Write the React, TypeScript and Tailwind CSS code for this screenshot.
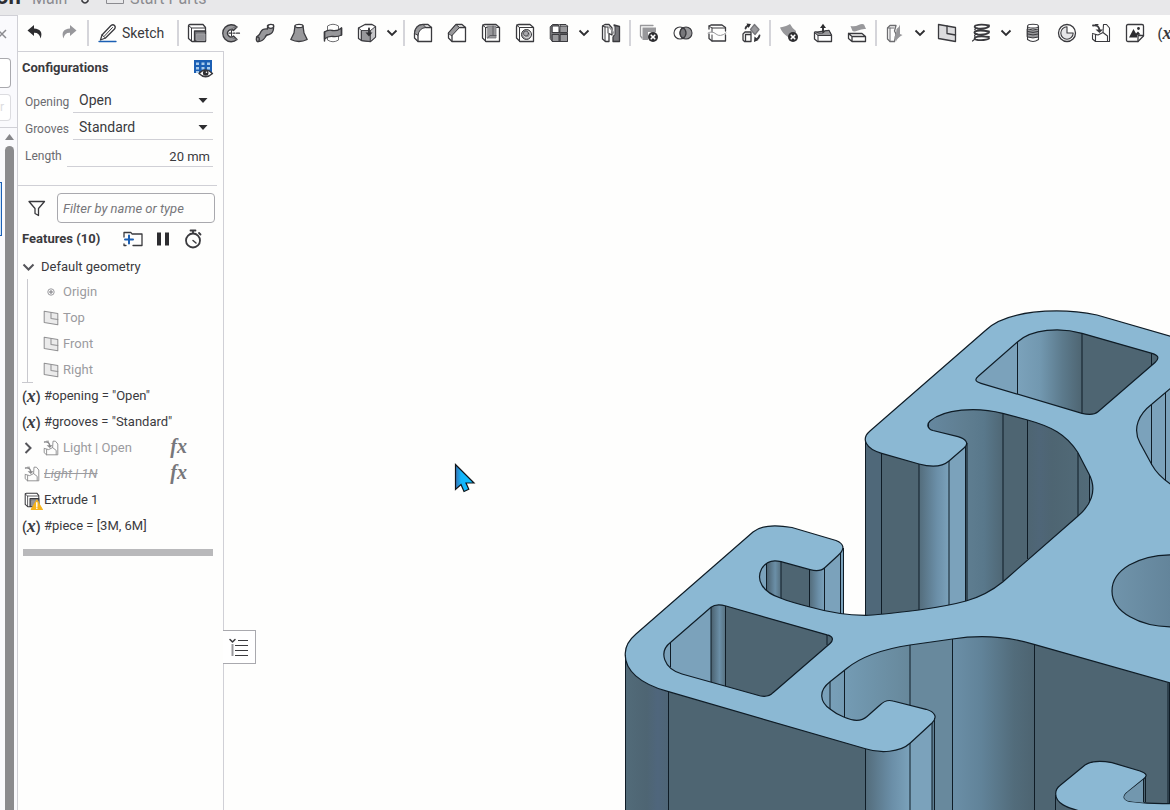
import type { ReactNode } from "react";

// === COLOURS OF THE SOLID ===
const FACE = "#8bb8d3";
const LIGHT = "#7ba2bb";
const DARK = "#4e6572";
const EDGE = "#0f1c26";

const S = { fill: "none", stroke: "#3a3a3e", strokeWidth: 1.3, strokeLinejoin: "round" as const, strokeLinecap: "round" as const };
const G = "#98989b";

function Icon({ children, className = "h-5 w-5" }: { children: ReactNode; className?: string }) {
  return (
    <svg viewBox="0 0 20 20" className={`${className} shrink-0 overflow-visible`} aria-hidden="true" {...S}>
      {children}
    </svg>
  );
}

const deleteBadge = (
  <>
    <circle cx="14" cy="14" r="5" fill="#2d2d30" stroke="none" />
    <path d="M12.200 12.200l3.600 3.600M15.800 12.200l-3.600 3.600" stroke="#fff" strokeWidth="1.600" />
  </>
);

const boxOutline = <path d="M1.500 4Q1.500 1.500 4 1.500H15L18.500 4.500V18.500H5L1.500 15Z" />;

const extrude = (
  <>
    <path d="M1.500 3Q1.500 1.500 3 1.500H16L18.500 4.500V18.500H5L1.500 15.500Z" fill="#fff" />
    <path d="M1.500 2.500L4.500 5V18M4.500 5H18" strokeWidth="1" />
    <path d="M7.500 8H18.500V18H7.500Z" fill="#77777b" />
    <path d="M10 11H18V17.500H10Z" fill="#949498" stroke="#a9a9ad" strokeWidth=".8" />
  </>
);

const derived = (
  <>
    <path d="M7 1.500H4.500M1.500 11.500V16L4.500 18.500H18.500V5L15.500 1.500H12.500L12 9.500L7 12L1.500 10.500M4.500 18.500V12M12 9.500L16.500 13V18" strokeWidth="1.100" />
    <path d="M2 2.500Q7.500 1.500 8.500 7" strokeWidth="1.800" />
    <path d="M4.500 6.500H12L8.500 10Z" fill="#3a3a3e" stroke="none" />
  </>
);

const plane = (
  <>
    <path d="M1.500 1.500L18.500 4.500V18.500L1.500 15.500Z" fill="#dcdcde" />
    <path d="M10 3V10.500L18.500 12" />
  </>
);

const icons: Record<string, ReactNode> = {
  Undo: (
    <path d="M9 2L2.500 7.500L9 13V9.700Q14.500 9.500 15.500 15.500Q19 6.200 9 5.400Z" fill="#2d2d30" stroke="none" />
  ),
  Redo: (
    <path d="M11 2L17.500 7.500L11 13V9.700Q5.500 9.500 4.500 15.500Q1 6.200 11 5.400Z" fill="#98989c" stroke="none" />
  ),
  Extrude: extrude,
  Revolve: (
    <>
      <path d="M16 4A8.500 8.500 0 1 0 16 16.500L12.500 13A3.600 3.600 0 1 1 12.500 7.500Z" fill={G} />
      <path d="M16 4L12.500 4.500L9.500 7M16 16.500L12.500 15.500L9.500 13.500" stroke="#6d6d70" strokeWidth=".9" />
      <path d="M8 10.200H11M12.500 10.200H14M15.500 10.200H18.500" strokeWidth="1.200" />
      <path d="M10.500 7.500V13" strokeWidth="1" />
    </>
  ),
  Sweep: (
    <>
      <path d="M1.500 14Q5 12 6 8.500Q7.500 5.500 12.500 6V2.500L18.500 2V6Q18 10.500 14 11.500Q11 11.500 10 14.500Q7 19 2.500 18.500Z" fill={G} />
      <ellipse cx="15.800" cy="3.300" rx="2.900" ry="2" fill="#fff" />
      <ellipse cx="2.800" cy="16.200" rx="1.500" ry="2.400" fill={G} />
    </>
  ),
  Loft: (
    <>
      <path d="M6 3L5 10L1.800 16.500Q10 20.500 18.200 16.500L15 10L14 3Z" fill={G} />
      <ellipse cx="10" cy="3" rx="4" ry="1.600" fill="#fff" />
    </>
  ),
  Thicken: (
    <>
      <path d="M4.500 7V3Q10 -.5 15.500 3V7M4.500 14V17Q10 20.500 15.500 17V13" stroke="#6d6d70" strokeWidth="1" />
      <path d="M1.500 9Q5 6.500 9.500 7.500T18.500 5V12Q15 14 10 13.500T1.500 16Z" fill={G} />
      <path d="M1.500 9V18M18.500 5V12" strokeWidth="1.500" />
    </>
  ),
  Enclose: (
    <>
      <path d="M1.500 5L8 1.500H15L18.500 3.500V14L13.500 18.500L4.500 17.500L1.500 15.500Z" fill="#fff" />
      <path d="M4.500 7.500H13.500V18.500L4.500 17.500Z" fill={G} strokeWidth=".9" />
      <path d="M13.500 7.500L18.500 3.500V14L13.500 18.500Z" fill="#c5c5c8" strokeWidth=".9" />
      <path d="M1.500 5L4.500 7.500V17.500" strokeWidth=".9" />
      <path d="M12 5.500V10.500" strokeWidth="2" />
      <path d="M8.500 9.500H15.500L12 13.500Z" fill="#2d2d30" stroke="none" />
    </>
  ),
  Fillet: (
    <>
      <path d="M1.500 11Q2 2 10 1.500H15L18.500 4.500V18.500H5L1.500 15Z" fill="#fff" />
      <path d="M1.500 10Q2.500 2 10 1.500L13 4.500Q6 5 5 12Z" fill={G} strokeWidth="1" />
      <path d="M5 18V12M13 4.500H18.500" />
    </>
  ),
  Chamfer: (
    <>
      <path d="M1.500 10L9 1.500H15L18.500 4.500V18.500H5L1.500 15Z" fill="#fff" />
      <path d="M1.500 10L9 1.500L12.500 4.500L5 12.500Z" fill={G} strokeWidth="1" />
      <path d="M5 18V12.500M12.500 4.500H18.500" />
    </>
  ),
  Shell: (
    <>
      {boxOutline}
      <path d="M1.500 2L4.500 4.500V18.500M4.500 4.500H18.500" strokeWidth="1" />
      <path d="M6.500 3H15V15H6.500Z" fill={G} stroke="#77777b" strokeWidth=".8" />
      <path d="M12 3V12.500H15M6.500 15L9 12.500H12" stroke="#55555a" strokeWidth=".9" />
    </>
  ),
  Hole: (
    <>
      {boxOutline}
      <path d="M1.500 2L4.500 4.500V18.500M4.500 4.500H18.500" strokeWidth="1" />
      <circle cx="11.500" cy="11.500" r="5" fill={G} strokeWidth="1" />
      <path d="M13 8A3.500 3.500 0 1 1 8.500 12" stroke="#ddd" strokeWidth="1" />
      <circle cx="11" cy="10.500" r="2.500" fill="#aaaaae" strokeWidth=".7" />
    </>
  ),
  Pattern: (
    <>
      <path d="M1.500 3.500L3.500 1.500H9.500L10.500 10H18.500V18.500H3.500L1.500 16Z" fill="#77777b" strokeWidth="1" />
      <path d="M3.500 3H10V9.500H3.500Z" fill="#fff" strokeWidth="1" />
      <path d="M11.500 3H18.500V9.500H11.500ZM3.500 11.500H10V18.500H3.500ZM11.500 11.500H18.500V18.500H11.500Z" fill={G} strokeWidth="1" />
      <path d="M11.500 3L10.500 1.500H17L18.500 3" strokeWidth="1" />
    </>
  ),
  "Move face": (
    <>
      <path d="M1.500 3L4 1.500H8L11 5V12L8 10.500V18.500H4.500L1.500 16Z" fill="#fff" />
      <path d="M4 3.500V18M1.500 3L4 4H7V10" strokeWidth="1" />
      <path d="M13 2L18.500 3.500V18.500H12V14L14 11V4.500Z" fill="#77777b" />
      <path d="M8 3.500L13.500 11V4" stroke={G} />
    </>
  ),
  "Delete part": (
    <>
      <path d="M3.500 4.500H17V9H9V17H3.500Z" fill={G} stroke="none" />
      <path d="M1.500 2.500H14M1.500 2.500V13L3 15" stroke={G} />
      {deleteBadge}
    </>
  ),
  Boolean: (
    <>
      <circle cx="7" cy="10" r="6" strokeWidth="1.100" />
      <circle cx="13" cy="10" r="6" fill={G} strokeWidth="1.100" />
      <path d="M10 4.800A6 6 0 0 1 10 15.200A6 6 0 0 1 10 4.800Z" fill="#77777b" />
    </>
  ),
  Split: (
    <>
      <path d="M2 6V3L4 2H15L18.500 4.500V8M18.500 12V18H5L2 15.500V11" />
      <path d="M2 3L5 5H18.500M5 5V9M5 12V18" strokeWidth="1" />
      <path d="M1 10Q5 7.500 9 11T19 10" stroke={G} strokeWidth="1" />
    </>
  ),
  Transform: (
    <>
      <path d="M2 11L4 9H10V18.500H3.500L2 17ZM4.500 11.500H10M4.500 11.500V18" />
      <path d="M13.500 1.500L18 6.500L14 11.500L9.500 6.500Z" fill={G} stroke="#77777b" />
      <path d="M4.500 5.500Q5 3 8 2.500" strokeWidth="1.800" />
      <path d="M5.500 .5L10 1L7.500 5ZM13 19L13.500 13.500L17.500 17Z" fill="#2d2d30" stroke="none" />
      <path d="M18.500 12.500Q18 15.500 15 16.500" strokeWidth="1.800" />
    </>
  ),
  "Delete face": (
    <>
      <path d="M1 4.500Q8 3 11 1Q13 5 17 8V14H9Q3 10 1 4.500Z" fill={G} stroke="none" />
      {deleteBadge}
    </>
  ),
  "Replace face": (
    <>
      <path d="M1.500 9.500V16L4.500 18.500H18.500V12L16 7.500Z" fill="#fff" />
      <path d="M1.500 9.500L5 12.500H18.500L16 7.500Q12 7 10 10Q6 11 3 9Z" fill={G} strokeWidth="1" />
      <path d="M5 12.500V18" strokeWidth="1" />
      <path d="M10 9V3.500" strokeWidth="2" />
      <path d="M7 5L10 .8L13 5Z" fill="#2d2d30" stroke="none" />
    </>
  ),
  "Offset surface": (
    <>
      <path d="M3.500 3Q8 4 11.500 2Q15 .5 17 1.500L19 6Q15 5.500 11 7.500Q7 9 5.500 8Z" fill={G} stroke="none" />
      <path d="M1.500 10.500H15L18.500 13.500V18.500H5L1.500 15.500ZM1.500 10.500L5 13.500H18.500M5 13.500V18.500" />
    </>
  ),
  "Frame tools": (
    <>
      <path d="M2.500 5L5 2.500H11L9.500 8L11 11L9.500 18.500H5L2.500 16Z" fill="#fff" stroke="#6d6d70" />
      <path d="M5 5V18.500M2.500 5H9" stroke="#6d6d70" strokeWidth="1" />
      <path d="M11.500 6Q14 5 15 1.500V11L17.500 12Q12 15 11 18.500L9.500 14Q11.500 11 11.500 6Z" fill={G} stroke="none" />
    </>
  ),
  Plane: plane,
  Helix: (
    <g strokeWidth="1.800">
      <path d="M18 2.500Q10 .8 4.500 2.500Q2 4.500 7 5.500Q15 6 18 3.500M18 8.500Q8 6.500 4 8.500Q2 10.500 7 11.500Q15 12 18 9.500M18 14Q8 12.500 4 14.500Q2.500 16.500 7 17Q15 17.500 18 15.500" />
      <path d="M4.500 5.500Q3 6.500 4.500 7M4.500 11.500Q3 12.500 4 13.500M1.500 18L4 16" strokeWidth="1.200" />
    </g>
  ),
  Thread: (
    <>
      <path d="M4.500 3.500V16.500Q10 20.500 15.500 16.500V3.500" fill="#fff" strokeWidth="1.100" />
      <path d="M4.500 6Q10 8 15.500 6V14Q10 16 4.500 14Z" fill={G} strokeWidth="1" />
      <ellipse cx="10" cy="3.200" rx="5.500" ry="1.900" fill="#fff" strokeWidth="1.100" />
      <path d="M4.500 8.500Q10 10.500 15.500 8.500M4.500 11Q10 13 15.500 11" strokeWidth="1" />
    </>
  ),
  "Mate connector": (
    <>
      <circle cx="10" cy="10" r="8.500" />
      <path d="M10 3.800A6.200 6.200 0 1 0 16.200 10H10Z" fill="#e6e6e8" strokeWidth="1.100" />
    </>
  ),
  Derived: derived,
  "Insert image": (
    <>
      <path d="M3 1.500H17Q18.500 1.500 18.500 3V13L13 18.500H3Q1.500 18.500 1.500 17V3Q1.500 1.500 3 1.500Z" />
      <path d="M18.500 12.500H13V18.500" />
      <path d="M4 14.500L8.500 6L11 10.500L13 8.500L15.500 11.500L12 12V14.500Z" fill="#2d2d30" stroke="none" />
      <circle cx="13.500" cy="5.500" r="1.400" fill="#2d2d30" stroke="none" />
    </>
  ),
};

function ToolButton({ name }: { name: string }) {
  return (
    <button type="button" aria-label={name} className="flex h-9 w-[34px] shrink-0 items-center justify-center">
      <Icon>{icons[name]}</Icon>
    </button>
  );
}

function Caret() {
  return (
    <button type="button" aria-label="More tools" className="flex h-9 w-[18px] shrink-0 items-center justify-center pr-0.5">
      <svg viewBox="0 0 12 8" className="h-2 w-3" fill="none" stroke="#2d2d30" strokeWidth="1.800" aria-hidden="true">
        <path d="M1.500 1.500L6 6L10.500 1.500" />
      </svg>
    </button>
  );
}

const Separator = () => <span className="mx-px h-[26px] w-0.5 shrink-0 bg-[#d5d5da]" />;

const groups: string[][] = [
  ["Extrude", "Revolve", "Sweep", "Loft", "Thicken", "Enclose", ">"],
  ["Fillet", "Chamfer", "Shell", "Hole", "Pattern", ">", "Move face"],
  ["Delete part", "Boolean", "Split", "Transform"],
  ["Delete face", "Replace face", "Offset surface"],
  ["Frame tools", ">", "Plane", "Helix", ">", "Thread", "Mate connector", "Derived", "Insert image"],
];

function Toolbar() {
  return (
    <div className="flex h-9 shrink-0 items-center overflow-hidden">
      <ToolButton name="Undo" />
      <ToolButton name="Redo" />
      <Separator />
      <button type="button" className="flex h-9 w-[86px] shrink-0 items-center gap-1 pl-2 text-[14px] text-[#3a3a3e]">
        <Icon>
          <path d="M2.500 17L4 12L13 2.500Q15 1 16.500 2.500Q18 4 16.500 6L7.500 15Z" />
          <path d="M4 12L7.500 15M6.500 13L14.500 4.500" strokeWidth="1" />
          <path d="M1 18.500H18" stroke="#1b5fb4" />
        </Icon>
        Sketch
      </button>
      {groups.map((group, g) => (
        <div key={g} className="flex shrink-0 items-center">
          <Separator />
          {group.map((name, i) => (name === ">" ? <Caret key={i} /> : <ToolButton key={name} name={name} />))}
        </div>
      ))}
      <button type="button" aria-label="Variable" className="ml-1 flex h-9 shrink-0 items-center">
        <VariableGlyph />
      </button>
    </div>
  );
}

function VariableGlyph() {
  return (
    <span className="w-[22px] text-[14px] leading-5 font-medium whitespace-nowrap text-[#3a3a3e]">
      (<span className="font-[family-name:'Liberation_Serif',serif] text-[18px] leading-5 font-bold italic">x</span>)
    </span>
  );
}

function TopBar() {
  return (
    <header className="flex h-[15px] shrink-0 items-end overflow-hidden bg-[#e8e8ea] pb-1.5">
      <div className="-ml-1 flex items-baseline text-[16px] leading-5 whitespace-nowrap text-[#8b8b90]">
        <span className="w-9 text-[22px] leading-5 font-bold text-[#2d2d30]">on</span>
        <span className="w-[49px]">Main</span>
        <svg viewBox="0 0 8 12" className="mr-[17px] h-3 w-2" fill="none" stroke="#3a3a3e" strokeWidth="1.500" aria-hidden="true">
          <path d="M1 5V9Q4 13 7 9V5" />
        </svg>
        <svg viewBox="0 0 18 12" className="mr-[6px] h-3 w-[18px]" fill="none" stroke="#8b8b90" aria-hidden="true">
          <path d="M.5 0V11.500H17.500V0" />
        </svg>
        <span>Start Parts</span>
      </div>
    </header>
  );
}

// Right end of the parts list, cut by the left side of the window.
function TabStrip() {
  return (
    <aside className="flex w-[18px] shrink-0 flex-col border-t border-r border-[#d0d0d6] bg-[#fafafd]">
      <button type="button" aria-label="Close" className="flex h-9 shrink-0 items-center">
        <svg viewBox="0 0 8 10" className="h-2.5 w-2" fill="none" stroke="#8b8b90" strokeWidth="1.500" aria-hidden="true">
          <path d="M-2 1L6 9M6 1L-2 9" />
        </svg>
      </button>
      <div className="mt-1.5 h-[30px] w-[11px] shrink-0 rounded-r border border-l-0 border-[#a9a9ae] bg-white" />
      <div className="mt-1.5 h-[27px] w-[11px] shrink-0 rounded-r border border-l-0 border-[#dcdce0] bg-white text-[12px] leading-6 text-[#dcdce0]">
        r
      </div>
      <div className="mt-1.5 flex min-h-0 flex-1 border-t border-[#d0d0d6]">
        <div className="mt-[54px] h-[54px] w-[5px] shrink-0">
          <div className="h-full w-0.5 border-y border-r border-[#1b5fb4] bg-[#cfe3f5]" />
        </div>
        <div className="flex w-[9px] flex-col items-center">
          <svg viewBox="0 0 9 6" className="mt-1.5 h-1.5 w-[9px]" fill="#86868a" aria-hidden="true">
            <path d="M4.500 0L9 6H0Z" />
          </svg>
          <div className="mt-1.5 w-full flex-1 rounded-t-full bg-[#8b8b8e]" />
        </div>
      </div>
    </aside>
  );
}

function ConfigSelect({ id, label, options }: { id: string; label: string; options: string[] }) {
  return (
    <div className="flex h-[27px] items-center">
      <label htmlFor={id} className="w-12 shrink-0 pt-1 text-[12px] text-[#6b6b70]">
        {label}
      </label>
      <div className="flex h-full flex-1 items-center border-b border-[#d0d0d6]">
        <select id={id} className="h-full min-w-0 flex-1 appearance-none pt-0.5 pl-1.5 text-[14px] text-[#3a3a3e] outline-none">
          {options.map((o) => (
            <option key={o}>{o}</option>
          ))}
        </select>
        <svg viewBox="0 0 10 5" className="mt-0.5 mr-[5px] h-[5px] w-2.5" fill="#2d2d30" aria-hidden="true">
          <path d="M.5 0H9.500L5 5Z" />
        </svg>
      </div>
    </div>
  );
}

function Configurations() {
  return (
    <section className="mr-1.5 border-b border-[#d0d0d6] pb-[18px]">
      <div className="flex h-[34px] items-center justify-between pr-1 pl-1">
        <h2 className="pb-0.5 text-[13px] font-bold text-[#3a3a3e]">Configurations</h2>
        <button type="button" aria-label="Show configuration table">
          <Icon>
            <path d="M1 1H19V14H1Z" fill="#1b5fb4" stroke="none" />
            <path d="M3 3.500H6V6H3ZM8.500 3.500H11.500V6H8.500ZM14 3.500H17V6H14ZM3 8H6V10.500H3ZM8.500 8H11.500V10.500H8.500ZM14 8H17V10.500H14ZM3 12H6V14H3Z" fill="#a9cbec" stroke="none" />
            <path d="M6 14.500Q12.500 7.500 19.500 14.500Q12.500 21 6 14.500Z" fill="#fff" strokeWidth="1.400" />
            <circle cx="12.700" cy="14" r="2.800" fill="#2d2d30" stroke="none" />
            <circle cx="13.500" cy="13.200" r=".8" fill="#fff" stroke="none" />
          </Icon>
        </button>
      </div>
      <div className="pr-1 pl-[7px]">
        <ConfigSelect id="opening" label="Opening" options={["Open", "Closed"]} />
        <ConfigSelect id="grooves" label="Grooves" options={["Standard", "Light"]} />
        <div className="flex h-[27px] items-center">
          <label htmlFor="length" className="w-[42px] shrink-0 pt-1 text-[12px] text-[#6b6b70]">
            Length
          </label>
          <input
            id="length"
            defaultValue="20 mm"
            className="h-full min-w-0 flex-1 border-b border-[#d0d0d6] pt-1.5 pr-[3px] text-right text-[13px] text-[#3a3a3e] outline-none"
          />
        </div>
      </div>
    </section>
  );
}

const row = "flex h-[26px] items-center";

function Feature({ icon, label, fx, muted }: { icon: ReactNode; label: ReactNode; fx?: boolean; muted?: boolean }) {
  return (
    <li className={`${row} ${muted ? "text-[#9b9b9f]" : "text-[#3a3a3e]"}`}>
      {icon}
      <span className="flex-1">{label}</span>
      {fx && (
        <span className="mr-[27px] pb-1 font-[family-name:'Liberation_Serif',serif] text-[20px] leading-5 font-bold italic text-[#77777b]">fx</span>
      )}
    </li>
  );
}

function FeatureList() {
  return (
    <section className="pr-[9px] pl-1 text-[13px]">
      <div className="flex h-[31px] items-center text-[#3a3a3e]">
        <h2 className="w-[101px] font-bold">Features (10)</h2>
        <button type="button" aria-label="Add folder">
          <Icon>
            <path d="M1 8V3.500H8L9 5H19V16.500H10M1 15V16.500H3" />
            <path d="M6 6.500V14.500M2 10.500H10" stroke="#1b5fb4" strokeWidth="2" />
          </Icon>
        </button>
        <button type="button" aria-label="Suppress updates" className="ml-2.5">
          <Icon>
            <path d="M4 3.500H8V16.500H4ZM12 3.500H16V16.500H12Z" fill="#2d2d30" stroke="none" />
          </Icon>
        </button>
        <button type="button" aria-label="Regeneration times" className="ml-2.5">
          <Icon>
            <circle cx="10" cy="11.500" r="7" strokeWidth="1.800" />
            <path d="M7.500 1.500H12.500M10 1.500V4M16 4L17.500 5.500" strokeWidth="1.800" />
            <path d="M10 11.500L13 14" strokeWidth="1.500" />
          </Icon>
        </button>
      </div>

      <button type="button" className="flex h-[25px] items-center gap-1.5 text-[#3a3a3e]">
        <svg viewBox="0 0 12 8" className="h-2 w-[13px]" fill="none" stroke="#55555a" strokeWidth="2" aria-hidden="true">
          <path d="M1 1.500L6 6.500L11 1.500" />
        </svg>
        Default geometry
      </button>
      <div className="flex">
        <div className="flex w-[11px] flex-col items-center">
          <span className="w-px flex-1 bg-[#c9c9ce]" />
          <span className="h-px w-full bg-[#c9c9ce]" />
        </div>
        <ul className="flex-1 pl-2.5 text-[#9b9b9f]">
          <li className={`${row} gap-1`}>
            <svg viewBox="0 0 16 16" className="h-4 w-4" fill="none" stroke="#9b9b9f" aria-hidden="true">
              <circle cx="8" cy="8" r="3.200" />
              <circle cx="8" cy="8" r="1.300" fill="#9b9b9f" />
            </svg>
            Origin
          </li>
          {["Top", "Front", "Right"].map((name) => (
            <li key={name} className={`${row} gap-1`}>
              <Icon className="h-4 w-4 opacity-55">{plane}</Icon>
              {name}
            </li>
          ))}
        </ul>
      </div>
      <ul>
        <Feature icon={<VariableGlyph />} label={'#opening = "Open"'} />
        <Feature icon={<VariableGlyph />} label={'#grooves = "Standard"'} />
        <Feature
          muted
          fx
          icon={
            <>
              <svg viewBox="0 0 8 12" className="mr-[11px] ml-0.5 h-3 w-2" fill="none" stroke="#55555a" strokeWidth="2" aria-hidden="true">
                <path d="M1.500 1L6.500 6L1.500 11" />
              </svg>
              <Icon className="mr-1 h-4 w-4 opacity-60">{derived}</Icon>
            </>
          }
          label="Light | Open"
        />
        <Feature
          muted
          fx
          icon={<Icon className="mr-1 ml-0.5 h-4 w-4 opacity-60">{derived}</Icon>}
          label={<span className="italic line-through">Light | 1N</span>}
        />
        <Feature
          icon={
            <Icon className="mr-1 ml-0.5 h-4 w-4">
              {extrude}
              <path d="M16 10L23 22H9Z" fill="#f5b31d" stroke="#f5b31d" />
              <path d="M16 13.500V18M16 20V20.500" stroke="#fff" strokeWidth="1.800" />
            </Icon>
          }
          label="Extrude 1"
        />
        <Feature icon={<VariableGlyph />} label="#piece = [3M, 6M]" />
      </ul>
      <div className="mt-2.5 mr-px ml-px h-[7px] bg-[#b9b9bb]" />
    </section>
  );
}

function FeaturePanel() {
  return (
    <div className="w-[206px] shrink-0 border-t border-r border-[#d0d0d6]">
      <Configurations />
      <div className="flex items-center gap-2.5 pt-[7px] pr-2 pl-[9px]">
        <svg viewBox="0 0 20 20" className="h-5 w-5 shrink-0" {...S} aria-hidden="true">
          <path d="M2 3.500H17.500L11.500 10.500V17.500L8 15.500V10.500Z" />
        </svg>
        <input
          aria-label="Filter by name or type"
          placeholder="Filter by name or type"
          className="h-[30px] min-w-0 flex-1 rounded-sm border border-[#a9a9ae] px-[5px] text-[13px] italic outline-none placeholder:text-[#77777b]"
        />
      </div>
      <FeatureList />
    </div>
  );
}

const FACE_PATH =
  "M625.300 653C625.500 645 629 640 636 634L753 532C762 524.500 778 525 792 527.500L836 540.500C844 543.500 845.500 549 838 555.500L825 567.500C821 571.500 815 571 810 569.700L781 561.700C771 559 765 563 761.500 569C756 580 762 592 781 598.300C790 602 800 604.500 810 607Q838 615 865.500 615.300Q876 615.300 919 610C940 607 950 605.500 966 601C980 597 991 591.500 1003 581.700L1078 516C1090 506 1098 491 1089 474L1077.700 452.300C1066 434 1051 426.500 1027.700 420L1002.700 413.300C976 406.500 944 409 930 421C926 425 928 429 933 430.500L958 436.700C966 439 969.500 443.500 964 448L949 461C942 467 930 467 919 464L881.700 453.300C866 449 860.500 439 870 431L986 330C1006 311 1056 306.500 1097 315L1172 336.600V387L1152 404C1139 414 1132 428 1140 443L1152 465Q1158 476 1172 485V683.500L1034 644.300C1008 636.500 980 634.500 952.500 639L910 645C884 649 862 656 847 668.300L830 681.700C818 691 820 702 830 709Q836 714 844.300 717.300C855 722 862 721 867 716.500L880 705Q886 699 893 701L926 709.300C935 712 938 717 932 723L910 743.300C900 752.500 880 753.500 865.500 748.700L668.500 691.700C640 684 624 670 625.300 653Z";
const HOLE_A =
  "M670.700 642.300L711 607.300Q716 603.200 726 606L827 634.800C833 636 834 640 830 643.500L773 692.700C769 697 762 696.700 757 695L682 674C664 669 658 652 670.700 642.300Z";
const HOLE_B =
  "M1017.700 341.700C1032 329 1060 327 1082 333.300L1152 353.300C1158 355 1160 358 1155 362.500L1098 411.700Q1093 416 1082 413.300L981 383.300C974.500 381.500 975 379 978 376.500Z";
const CIRCLE = "M1172 554.800C1138 555 1112 570 1112 591C1112 612 1140 627 1172 626.800Z";
const TAB_PATH =
  "M1055.700 794Q1055.500 789 1060 785.500L1085 765C1092 760.500 1103 761 1112 762.700L1140 771C1147 773.500 1148 776 1143 779.500L1128 791.700C1121 797 1124 801 1133 801.700Q1150 804.200 1172 803.500V812H1084C1066 808 1055.700 803 1055.700 794Z";

// x, y and end y of every vertical edge that can be seen
const edges: [number, number, number][] = [
  [625.5, 655, 810], [668.5, 692, 810], [865.5, 749, 810], [910, 743, 810], [932, 723, 810], [934.5, 718, 810],
  [952.5, 639, 810], [1034.5, 644, 810], [910, 645, 705], [1168, 683, 803], [1169.5, 683, 803],
  [830, 682, 709], [844.5, 670, 717],
  [865.5, 440, 615], [881.5, 453, 614], [919, 464, 610], [949, 461, 605], [965.5, 447, 601], [967, 443, 601],
  [1003, 413, 581], [1027.5, 420, 559], [1078, 453, 516], [1089.5, 475, 502], [928.5, 423, 428],
  [766.5, 563, 590], [781, 562, 598], [809.5, 570, 607], [824.5, 568, 611], [840.5, 553, 614], [843.5, 548, 614],
  [670.5, 642, 667], [711, 607, 682], [725.5, 606, 686], [827, 635, 645],
  [1017.5, 342, 394], [1082, 333, 413], [1151.5, 353, 365],
  [1151.5, 404, 465], [1165.5, 392, 481],
  [1143.5, 779, 802], [1145.5, 777, 802], [1055.5, 795, 810],
];

function Wall({ fill, x, to, y, end = 812 }: { fill: string; x: number; to: number; y: number; end?: number }) {
  return <rect x={x} y={y} width={to - x} height={end - y} fill={fill} />;
}

function Gradient({ id, stops }: { id: string; stops: [number, string][] }) {
  return (
    <linearGradient id={id}>
      {stops.map(([offset, color]) => (
        <stop key={offset} offset={offset} stopColor={color} />
      ))}
    </linearGradient>
  );
}

function Model() {
  return (
    <svg viewBox="224 52 946 758" preserveAspectRatio="xMinYMin slice" className="block h-full w-full" aria-label="Part model">
      <defs>
        <Gradient id="turn" stops={[[0, "#536c7b"], [0.6, "#6b8fa8"], [1, "#7ba2bb"]]} />
        <Gradient id="corner" stops={[[0, "#526b79"], [0.5, "#4e6573"], [0.75, "#4f667c"], [1, "#4e6576"]]} />
        <Gradient id="slotLow" stops={[[0, "#7ba2bb"], [0.35, "#7299b1"], [1, "#67889b"]]} />
        <Gradient id="slotMid" stops={[[0, "#6b8fa7"], [0.35, "#618399"], [0.75, "#526c7b"], [1, "#4d6471"]]} />
        <Gradient id="slotHigh" stops={[[0, "#6688a0"], [0.5, "#5f7e91"], [0.75, "#59788b"], [1, "#4f6775"]]} />
        <Gradient id="slotHighRight" stops={[[0, "#4e6572"], [0.2, "#4f6678"], [0.4, "#4e6572"], [1, "#526b79"]]} />
        <Gradient id="fold" stops={[[0, "#4a606e"], [0.6, "#6b8fa7"], [1, "#56707f"]]} />
        <Gradient id="holeTurn" stops={[[0, "#7ba2bb"], [0.35, "#7298b0"], [0.7, "#5c7a8c"], [1, "#4e6572"]]} />
        <Gradient id="bore" stops={[[0, "#7094ab"], [1, "#63849a"]]} />
        <Gradient id="pointer" stops={[[0, "#3c6fb0"], [0.3, "#12b5fa"], [1, "#12c0ff"]]} />
      </defs>

      {/* lower slot */}
      <Wall fill="url(#slotLow)" x={821} to={910} y={644} />
      <Wall fill="#68899d" x={910} to={952.5} y={639} />
      <Wall fill="url(#slotMid)" x={952.5} to={1034.5} y={636} />
      <Wall fill={DARK} x={1034.5} to={1172} y={644} />

      {/* front body */}
      <path d="M625 653L668.500 691V812H625Z" fill="url(#corner)" />
      <path d="M668.500 691L865.500 748V812H668.500Z" fill={DARK} />
      <path d="M865.500 748L910 742V812H865.500Z" fill="url(#turn)" />
      <path d="M910 743L932 722V812H910Z" fill={LIGHT} />
      <path d="M932 722L935 716V812H932Z" fill="#5f7f93" />

      {/* upper slot and its lip */}
      <Wall fill="url(#slotHigh)" x={927} to={1003} y={408} end={604} />
      <Wall fill={DARK} x={1003} to={1027.5} y={413} end={581} />
      <Wall fill="url(#slotHighRight)" x={1027.5} to={1089} y={420} end={560} />
      <Wall fill="#648498" x={1089} to={1095} y={470} end={510} />
      <path d="M865.500 440L881.500 453V616H865.500Z" fill="#4f6879" />
      <path d="M881.500 453L919 463V616H881.500Z" fill={DARK} />
      <path d="M919 463L949 460V610H919Z" fill="url(#turn)" />
      <path d="M949 461L965.500 446V606H949Z" fill={LIGHT} />
      <path d="M965.500 446L967.500 442V606H965.500Z" fill="#56707f" />

      {/* small lip on the left */}
      <Wall fill={LIGHT} x={758} to={766.5} y={564} end={592} />
      <Wall fill="url(#fold)" x={766.5} to={781} y={560} end={600} />
      <Wall fill={DARK} x={781} to={809.5} y={561} end={608} />
      <Wall fill="url(#turn)" x={809.5} to={824.5} y={569} end={612} />
      <path d="M824.500 567L843.500 549V615H824.500Z" fill={LIGHT} />

      {/* slot at the right side */}
      <Wall fill={LIGHT} x={1136} to={1172} y={386} end={487} />

      <path d={FACE_PATH} fill={FACE} stroke={EDGE} strokeWidth="1.200" />

      {/* pockets */}
      <clipPath id="holeA"><path d={HOLE_A} /></clipPath>
      <g clipPath="url(#holeA)">
        <Wall fill={LIGHT} x={660} to={711} y={600} end={700} />
        <Wall fill="url(#fold)" x={711} to={725.5} y={600} end={700} />
        <Wall fill={DARK} x={725.5} to={836} y={600} end={700} />
      </g>
      <path d={HOLE_A} fill="none" stroke={EDGE} strokeWidth="1.200" />
      <clipPath id="holeB"><path d={HOLE_B} /></clipPath>
      <g clipPath="url(#holeB)">
        <Wall fill={LIGHT} x={970} to={1017.5} y={325} end={418} />
        <Wall fill="url(#holeTurn)" x={1017.5} to={1082} y={325} end={418} />
        <Wall fill={DARK} x={1082} to={1162} y={325} end={418} />
      </g>
      <path d={HOLE_B} fill="none" stroke={EDGE} strokeWidth="1.200" />
      <path d={CIRCLE} fill="url(#bore)" stroke={EDGE} strokeWidth="1.200" />

      <path d="M1055.500 794L1084 812H1055.500Z" fill={DARK} />
      <path d={TAB_PATH} fill={FACE} stroke={EDGE} strokeWidth="1.200" />
      <path d="M1143.500 779.500L1128 791.700C1121 797 1124 801 1133 801.700L1143.500 802.800Z" fill="#7297ae" />

      {edges.map(([x, y, end]) => (
        <path key={`${x}-${y}`} d={`M${x} ${y}V${end}`} stroke={EDGE} strokeWidth="1" />
      ))}

      <path
        d="M455.500 464.500V489.500L461 484.500L464 491.500L468.800 489.300L466 483H474Z"
        fill="url(#pointer)"
        stroke="#101418"
        strokeWidth="1.200"
      />
    </svg>
  );
}

export default function App() {
  return (
    <div className="flex h-screen flex-col overflow-hidden bg-[#fefefd] font-[family-name:Roboto,sans-serif]">
      <TopBar />
      <div className="flex min-h-0 flex-1">
        <TabStrip />
        <div className="flex min-w-0 flex-1 flex-col">
          <Toolbar />
          <main className="flex min-h-0 flex-1">
            <FeaturePanel />
            <div className="relative min-w-0 flex-1 pt-px">
              <Model />
              <button
                type="button"
                aria-label="Toggle feature list"
                className="absolute bottom-[146px] -left-px flex h-[34px] w-[33px] items-center justify-center border border-l-0 border-[#a9a9ae] bg-white pt-0.5"
              >
                <Icon>
                  <path d="M1 1.500L3.500 4L6 1.500" strokeWidth="1.500" />
                  <path d="M3.500 6V18" stroke="#98989c" strokeWidth="2" strokeLinecap="butt" />
                  <path d="M9 2.500H19M6 7.500H19M6 12.500H19M6 17.500H19" strokeWidth="1.100" strokeLinecap="butt" />
                </Icon>
              </button>
            </div>
          </main>
        </div>
      </div>
    </div>
  );
}
